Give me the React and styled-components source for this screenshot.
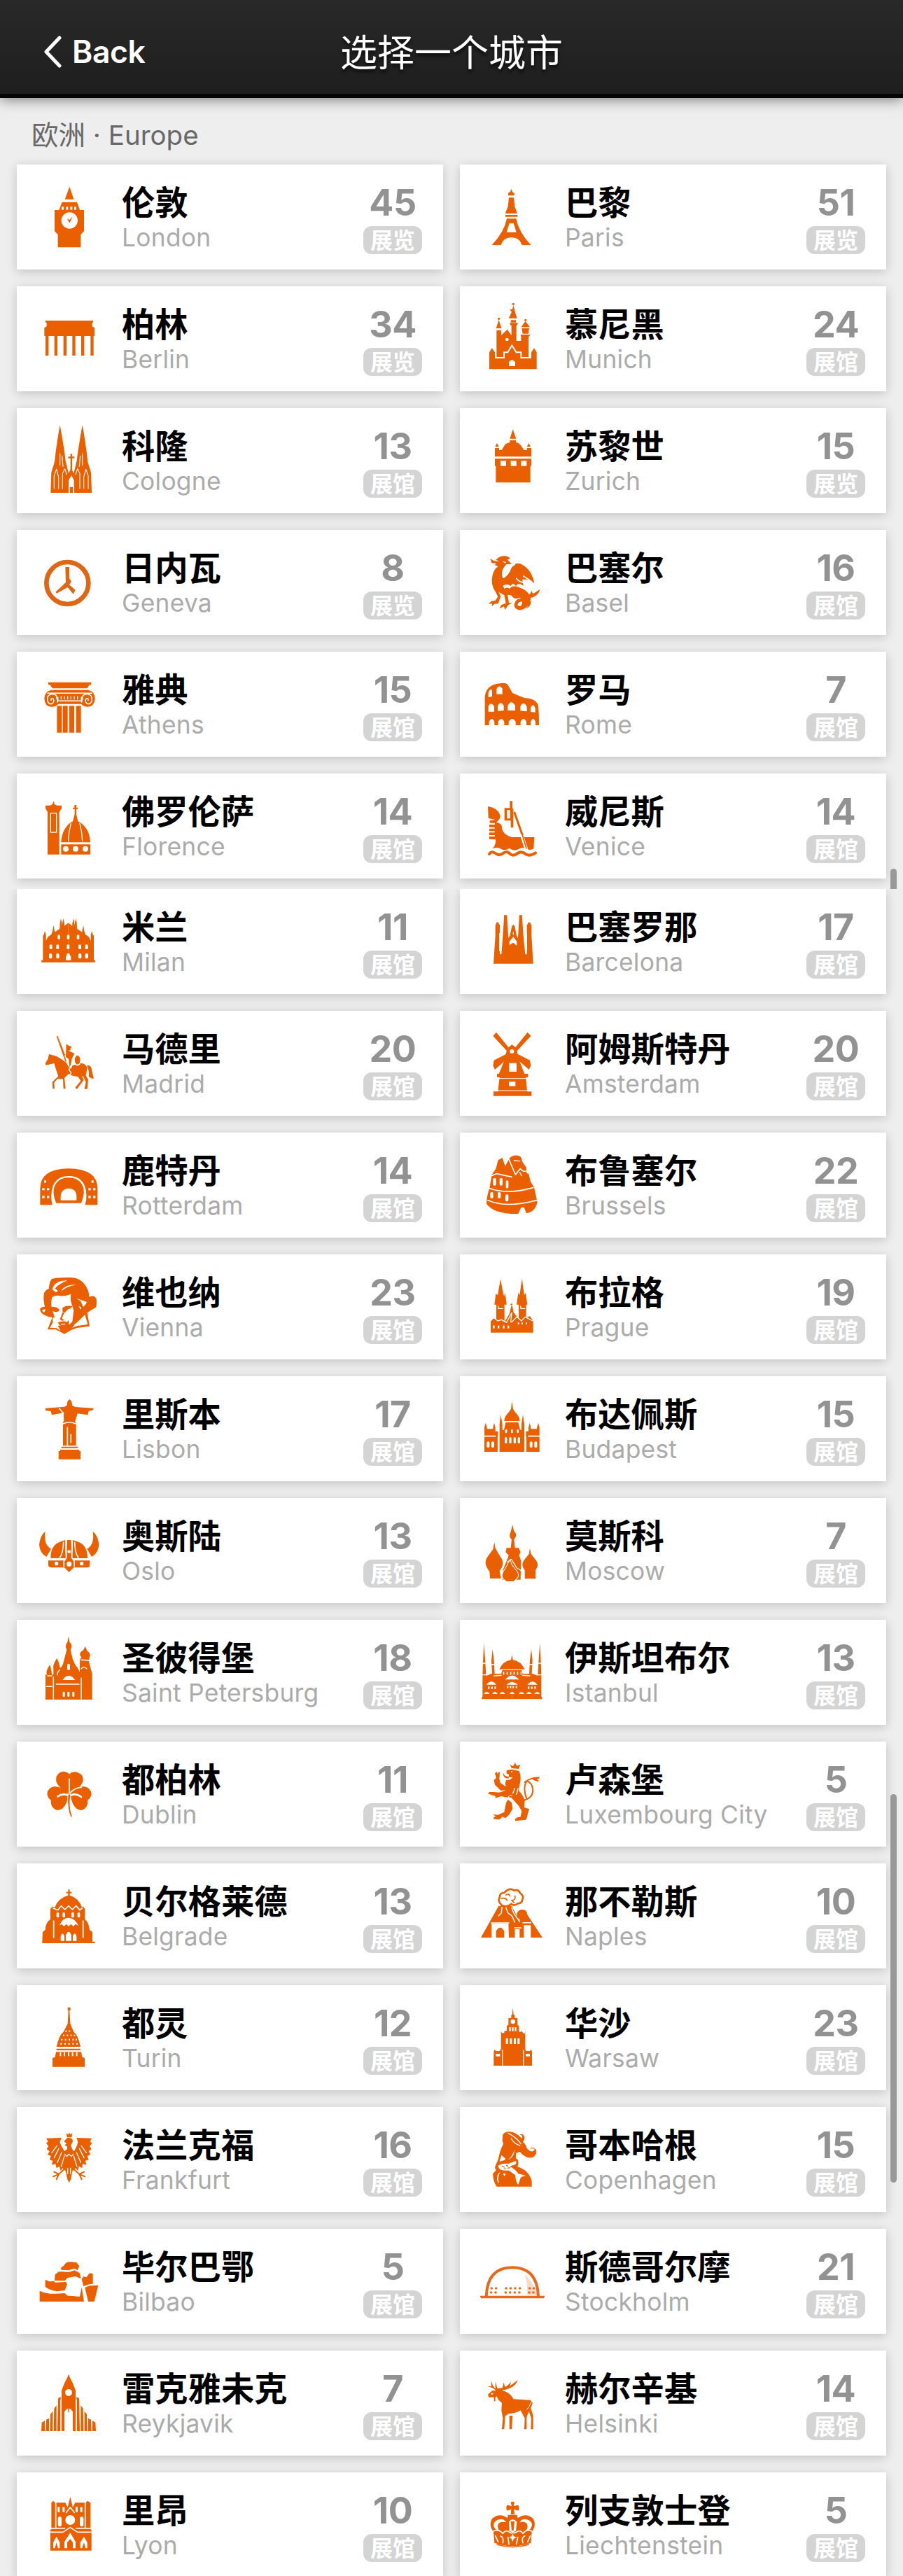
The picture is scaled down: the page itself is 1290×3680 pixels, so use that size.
import React from "react";
import styled, { createGlobalStyle } from "styled-components";

const GlobalStyle = createGlobalStyle`
  * { box-sizing: border-box; }
  body { margin: 0; background: #eee; }
`;

const latin = `Inter, "Noto Sans CJK SC", sans-serif`;
const han = `"Noto Sans CJK SC", Inter, sans-serif`;

const Page = styled.div`
  width: 1290px;
  height: 3680px;
  background: #eee;
  font-family: ${latin};
  overflow: hidden;
`;

const Pane = styled.section`
  position: relative;
  height: ${(p) => p.$height}px;
  background: #eee;
  overflow: hidden;
`;

const Header = styled.header`
  position: relative;
  display: grid;
  grid-template-columns: 1fr auto 1fr;
  align-items: center;
  height: 140px;
  padding: 9px 62px 0;
  border-bottom: 6px solid #080306;
  background: linear-gradient(#292929, #1e1e1e);
  box-shadow: 0 2px 18px rgba(0, 0, 0, 0.5);
  color: #fff;
`;

const Back = styled.button`
  display: flex;
  align-items: center;
  gap: 15px;
  padding: 5px 0 0;
  border: 0;
  background: none;
  color: inherit;
  font: 600 44.5px/50px ${latin};
  letter-spacing: -0.4px;
`;

const Title = styled.h1`
  margin: 0;
  font: 400 53px/64px ${han};
  text-shadow: 0 4px 5px rgba(0, 0, 0, 0.7);
`;

const SectionTitle = styled.h2`
  margin: 0;
  height: 95px;
  padding: 25px 45px 0;
  color: #686868;
  font: 400 38.5px/56px ${latin};
`;

const Grid = styled.div`
  display: grid;
  grid-template-columns: 1fr 1fr;
  gap: 24px;
  padding: 0 24px;
`;

const Card = styled.article`
  display: grid;
  grid-template-columns: 100px 1fr 84px;
  column-gap: 26px;
  height: 150px;
  padding: 0 30px 0 24px;
  background: #fff;
  box-shadow: 0 3px 14px rgba(0, 0, 0, 0.19);
`;

const Icon = styled.svg`
  width: 100px;
  height: 150px;
  fill: #ea6000;
`;

const Names = styled.div`
  padding-top: 22px;
  white-space: nowrap;
`;

const Name = styled.div`
  color: #000;
  font: 700 47.3px/60px ${han};
`;

const Latin = styled.div`
  margin-top: 1px;
  color: #ababab;
  font: 400 35.4px/44px ${latin};
  letter-spacing: 0.25px;
`;

const Tally = styled.div`
  display: flex;
  flex-direction: column;
  align-items: center;
  padding-top: 25px;
`;

const Count = styled.div`
  height: 63px;
  color: #929292;
  font: 700 52px/60px ${latin};
  letter-spacing: -0.5px;
`;

const Badge = styled.div`
  width: 84px;
  height: 40px;
  border-radius: 12px;
  background: #d4d4d4;
  color: #fff;
  font: 700 32px/37px ${han};
  text-align: center;
`;

const ScrollThumb = styled.div`
  position: absolute;
  right: 9px;
  top: ${(p) => p.$top}px;
  width: 9px;
  height: ${(p) => p.$length}px;
  border-radius: 5px;
  background: #999;
`;

const ORANGE = "#ea6000";

const Holes = ({ xs, y, w, h, r = 0 }) =>
  xs.map((x) => <rect key={x} x={x} y={y} width={w} height={h} rx={r} fill="#fff" />);

const Mirror = ({ cx, children }) => (
  <>
    {children}
    <g transform={`translate(${2 * cx} 0) scale(-1 1)`}>{children}</g>
  </>
);

const Lines = ({ d, w = 5, c = "#fff" }) => (
  <path d={d} fill="none" stroke={c} strokeWidth={w} strokeLinecap="round" strokeLinejoin="round" />
);

const icons = {
  London: (
    <>
      <path d="M154 95L172 149H134ZM122 161H186L198 195H216V286L202 300V355H104V300L90 286V195H109Z" />
      <Holes xs={[120, 139, 157, 174]} y={181} w={9} h={13} />
      <circle cx="154" cy="240" r="35" fill="#fff" />
      <path d="M143 231L153 238L167 223L154 251Z" />
    </>
  ),
  Paris: (
    <>
      <path d="M148 105L153 118L161 122V133H135V122L143 118ZM138 142H159L163 180L174 210H122L134 180ZM123 216H175V224H123ZM129 232H169Q180 290 232 345H194Q186 314 149 312Q112 314 104 345H65Q118 290 129 232Z" />
      <path d="M140 252H158L170 290H128Z" fill="#fff" />
    </>
  ),
  Berlin: (
    <>
      <path d="M51 147H255V155H251V172L261 178V213H46V178L56 172V155H51Z" />
      {[51, 89, 128, 166, 204, 244].map((x) => <rect key={x} x={x} y="210" width="13" height="87" />)}
    </>
  ),
  Munich: (
    <>
      <path d="M85 188H105V210L131 185L166 234H190V212L187 207H230L222 218V304H85ZM83 180L95 144L106 180ZM149 166H170V240H149ZM141 157H177L172 168H146ZM146 145H168V155H146ZM137 137L150 110L142 100L153 98L157 80L165 112L173 137ZM190 175L209 150L228 175ZM193 179H225L221 203H197Z" />
      <circle cx="95" cy="139" r="5" /><circle cx="157" cy="76" r="5" /><circle cx="209" cy="145" r="5" />
      <circle cx="130" cy="228" r="7" fill="#fff" />
      <path d="M54 355V283L65 265L78 283V309H120V286H135L151 259L168 286H187V309H234V283L246 265L257 283V355Z" stroke="#fff" strokeWidth="12" paintOrder="stroke" />
      <path d="M138 342V325Q151 307 165 325V342Z" fill="#fff" />
    </>
  ),
  Cologne: (
    <>
      <Mirror cx={161}>
        <path d="M73 363L76 275L90 230L95 186L106 112L113 73L120 112L132 186L137 225L150 280L162 255V363Z" />
        <Lines d="M88 345V290L98 262L107 295V345M113 245V195M126 250L122 205M124 345V280L134 260L142 285" w={3.5} />
      </Mirror>
      <path d="M158 196H165V208H175V215H165V265H158V215H148V208H158Z" />
      <path d="M150 363V310L162 288L173 310V363Z" fill="#fff" />
      <path d="M155 338H168V363H155Z" />
    </>
  ),
  Zurich: (
    <>
      <path d="M155 91L169 131H142ZM78 208V171H96V180H107L122 155Q130 149 142 147V138H168V147Q180 148 188 158L203 180H215V171H234V208ZM87 150L95 166H79ZM223 150L231 166H215ZM78 217H234V248H230V319H82V248H78Z" />
      <Holes xs={[102, 146, 190]} y={226} w={24} h={22} />
    </>
  ),
  Geneva: (
    <>
      <circle cx="145" cy="228" r="90" fill="none" stroke="#df6614" strokeWidth="20" />
      <path d="M136 159H153V207L162 222L153 235L179 258L170 275L146 246L99 272L94 266L138 225Z" fill="#df6614" />
    </>
  ),
  Basel: (
    <>
      <path d="M58 122Q75 137 98 134L82 129Q96 111 120 112Q140 114 143 124L131 127L150 146L128 147Q108 165 108 190Q109 212 118 206Q140 190 148 165Q155 152 163 152L167 144L185 144Q235 165 247 229Q225 208 195 213L200 240Q180 222 168 241Q155 222 146 240Q130 228 112 239L119 253Q128 243 140 252Q155 236 178 245Q220 256 232 290Q228 335 185 344Q160 340 161 320Q165 298 185 294Q203 298 200 308Q178 305 175 322Q188 335 195 314Q196 298 184 290Q160 302 148 280L132 278L138 313L152 314L135 322L121 343L117 328L98 337L105 322L125 314L118 280L94 266L103 285L92 316L76 317L65 328L66 316L51 317L62 306L80 303L91 286L80 264Q62 240 66 205Q70 170 92 157L76 150L86 145L64 141ZM272 254Q262 288 225 292L218 283L230 272L235 261L241 274ZM227 300L233 309Q230 330 212 337Q226 320 227 300Z" />
      <path d="M110 134L126 138L122 143Z" fill="#fff" />
      <Lines d="M170 208Q180 222 197 225M200 198Q218 208 238 224" w={5} />
    </>
  ),
  Athens: (
    <>
      <path d="M63 131H247V142H240L229 157H81L70 142H63ZM76 164H234Q263 170 263 202Q260 236 233 236Q214 236 204 224H106Q96 236 76 236Q48 236 46 202Q47 170 76 164Z" />
      <Lines d="M60 178H249M104 195V211H205V195M103 216L97 187Q76 174 62 190Q54 208 66 222Q84 228 87 210Q84 196 75 202V208M206 216L212 187Q233 174 247 190Q255 208 243 222Q225 228 222 210Q225 196 234 202V208" w={4.5} />
      <Lines d="M118 192V203M132 192V203M146 192V203M160 192V203M174 192V203M188 192V203" w={4} />
      {[100, 125, 153, 182].map((x) => <rect key={x} x={x} y="232" width="21" height="115" />)}
    </>
  ),
  Rome: (
    <>
      <path d="M35 315V195Q38 140 105 135Q130 130 138 150L153 177Q185 190 204 198Q250 200 262 225Q267 245 267 315Z" />
      <g fill="#fff">
        <path d="M50 196V176Q56 155 66 165V192ZM85 182V160Q96 138 110 158V182ZM50 257V235Q60 210 75 235V257ZM90 254V232Q103 207 116 232V252ZM133 252V232Q148 202 165 232V252ZM187 253V234Q201 208 215 236V256ZM231 258V240Q242 217 251 242V260Z" />
        <path d="M53 316V300Q65 276 76 300V316ZM92 316V300Q105 276 118 300V316ZM137 316V300Q152 276 167 300V316ZM188 316V300Q201 276 213 300V316ZM231 316V300Q242 276 252 300V316Z" />
      </g>
    </>
  ),
  Florence: (
    <>
      <path d="M85 118L90 132L101 137H120V150L110 165V347H60V165L51 150V137H70L81 132Z" />
      <rect x="73" y="170" width="25" height="82" fill="none" stroke="#fff" strokeWidth="4" />
      <path d="M175 135H183V146H190V152H183V175L190 205Q240 230 243 295H118Q122 230 168 205L176 175V152H168V146H175ZM118 304H243V347H118Z" />
      <Lines d="M160 214Q150 250 149 290M198 214Q208 250 209 290" w={4} />
      {[138, 180, 222].map((x) => <circle key={x} cx={x} cy="323" r="12" fill="#fff" />)}
    </>
  ),
  Venice: (
    <>
      <path d="M48 141Q90 146 101 180Q102 192 92 202L84 210Q110 212 108 235Q112 262 150 273H247L244 322Q228 331 214 323Q195 314 178 325Q160 335 140 320Q118 335 100 321Q88 315 68 322Q86 300 80 282H54V270H78V264H54V253H77V247H54V236H77V230H54V219H78V212H56V202L80 198L50 192Z" />
      <path fillRule="evenodd" d="M142 118H153V150H157V232H146V202H119V148H142ZM130 157V193H143V157Z" />
      <Lines d="M162 168L198 270" w={9} c={ORANGE} />
      <Lines d="M194 268L214 328" w={14} />
      <Lines d="M195 262L213 320" w={5} c={ORANGE} />
      <Lines d="M54 345Q64 330 80 342Q98 356 116 340Q130 330 145 346Q160 356 178 340Q196 332 210 346Q230 356 252 340" w={12} c={ORANGE} />
    </>
  ),
  Milan: (
    <>
      <Mirror cx={149}>
        <path d="M34 313V306H40V200L44 196L48 180L53 196V222L62 205L76 195L81 180L85 155L90 180V185L112 170L113 145L117 127L121 145V158L127 125L132 148V158L149 145V313Z" />
      </Mirror>
      <Holes xs={[68, 97, 142, 192, 221]} y={238} w={12} h={20} r={5} />
      <Holes xs={[66, 97, 142, 192, 221]} y={276} w={13} h={22} r={5} />
      <Holes xs={[103, 143, 185]} y={196} w={11} h={20} r={5} />
      <path d="M138 313V290Q149 268 160 290V313Z" fill="#fff" />
      <path d="M34 305H264V314H34Z" />
    </>
  ),
  Barcelona: (
    <>
      <path d="M72 320L80 200V155L84 148V143H94V148L99 155V280H106L112 200L117 125V112H130V125L136 210L142 200L151 160L157 152L163 160L171 200L177 210L182 125V112H195V125L200 200L208 280H215V155L220 148V143H230V148L235 155V200L242 320Z" />
      <path d="M140 240V225L157 205L172 225V243L157 230Z" fill="#fff" />
      <Lines d="M98 265V190M214 265V190M157 195V185" w={4} />
      <path d="M136 262L145 246L150 255L157 240L163 255L168 246L178 262" />
    </>
  ),
  Madrid: (
    <>
      <path d="M102 102L135 190L130 194ZM140 142L148 148L165 155L158 160V168L150 172L175 182L164 206Q160 235 154 240L150 206L138 198ZM66 186Q84 190 98 195Q120 206 140 222L152 243L160 247L167 234Q185 230 195 226Q222 220 230 246L224 278L234 295L230 335H218L224 305L212 280Q195 280 207 278L215 296L186 335L178 330L202 300L190 282Q165 280 150 270L132 288L137 334H128L126 292H102L88 308L90 334H82L80 305L98 288L106 280Q92 240 88 225L53 233L50 226L62 205Z" />
      <path d="M228 235Q248 230 250 258L258 290Q242 292 236 280Q240 258 228 235Z" />
      <ellipse cx="188" cy="211" rx="14" ry="22" stroke="#fff" strokeWidth="5" />
      <Lines d="M101 110L138 216" w={5} c={ORANGE} />
      <Lines d="M163 240L151 252L161 266L154 276" w={4} />
    </>
  ),
  Rotterdam: (
    <>
      <path d="M28 310V240Q28 156 150 154Q274 156 274 240V310H221Q233 268 219 228Q200 185 150 186Q102 186 83 228Q70 268 80 310Z" />
      <path d="M97 302Q75 250 96 218Q115 193 150 193Q190 193 207 222Q225 250 204 302Z" />
      <path d="M116 290V270Q120 240 150 239Q182 240 184 270V290Z" fill="#fff" />
      <Holes xs={[37, 57, 235, 255]} y={238} w={10} h={9} />
      <Holes xs={[37, 57, 235, 255]} y={271} w={10} h={10} />
      <Holes xs={[45, 248]} y={205} w={9} h={10} />
    </>
  ),
  Vienna: (
    <>
      <path d="M78 105Q95 98 165 99Q200 102 220 130Q238 155 238 182Q262 172 269 192Q272 215 266 228Q250 236 230 250L240 308L186 315L160 325L132 341L95 322L60 322L80 270Q60 268 42 258Q25 245 28 232Q40 222 48 225Q40 190 45 165Q52 152 65 148Q68 115 78 105Z" />
      <g fill="#fff">
        <path d="M80 183Q98 172 112 178Q135 180 160 170Q156 195 164 215L172 240L166 288L148 306L128 302L104 306L116 328L98 316L70 314L92 275L84 250L78 230Q72 202 80 183Z" />
        <path d="M80 150Q88 112 145 112Q106 128 92 146L104 156Q96 166 90 158ZM118 158Q130 130 184 130Q140 138 118 158Z" />
        <path d="M184 188L228 204Q222 220 212 224L202 200ZM192 222L204 226V238ZM220 258L232 300L188 306L166 314L176 300Q202 278 220 258Z" />
        <path d="M36 240Q46 232 52 238L44 250Z" />
      </g>
      <path d="M76 226Q98 222 112 238L104 245Q92 250 78 240ZM124 228Q142 218 166 222L160 232Q150 230 142 240L134 250L124 246ZM132 250Q124 264 122 276L134 282L122 284L112 278Q120 262 124 248ZM104 292Q128 282 142 290L150 282L152 306L140 318L118 320L112 312L130 310L110 302Z" />
      <Lines d="M118 299H134" w={4} />
      <path d="M82 272L98 268Q92 290 82 304Z" fill="#fff" />
    </>
  ),
  Amsterdam: (
    <>
      <path d="M151 145L170 160L181 210L205 270H220V285H211L216 346H235V365H72V346H91L98 285H87V270H95L120 210L130 162Z" />
      <Mirror cx={151}>
        <path d="M70 108L84 92L151 175L143 187ZM74 212L141 178L151 188L78 252L70 235Z" />
      </Mirror>
      <Holes xs={[139]} y={224} w={32} h={37} />
      <Holes xs={[138]} y={304} w={28} h={19} />
      <circle cx="151" cy="174" r="9" fill="#fff" />
      <Lines d="M95 290H211M74 342H233" w={3} />
    </>
  ),
  Brussels: (
    <>
      <path d="M140 110Q165 88 190 105L196 125L213 150V172L223 178L231 210L246 235L260 298Q250 342 212 345L203 320L190 322L178 348Q75 350 42 305Q42 275 55 238L65 180L82 155L92 118L110 108L122 145Z" />
      <Lines d="M137 112L166 180L186 155L200 166L210 165M62 185L85 176L150 190M52 238Q130 268 242 236M48 290Q130 325 258 290" w={5} />
      <Holes xs={[70, 98]} y={195} w={13} h={32} r={6} />
      <Holes xs={[125]} y={205} w={11} h={34} r={6} />
      <Holes xs={[58, 90]} y={255} w={13} h={27} r={6} />
      <Holes xs={[123]} y={265} w={13} h={30} r={6} />
      <Lines d="M160 120L185 122M185 170L192 185" w={4} />
    </>
  ),
  Prague: (
    <>
      <path d="M102 106L114 170L118 180L122 165L128 215H119V290L128 275L140 255L148 222L153 222L158 248L167 260L180 275V215H171L178 165L184 175L194 104L204 175L210 165L217 215H212V270L228 265L242 285V335H60V285L72 273L84 280V215H76L82 168L90 175Z" />
      <Lines d="M92 222V232H112M188 222V232H206M62 283L72 270L90 285L106 280L128 292L150 250L146 290M150 290L172 268L192 285L208 268L240 285" w={4} />
      <Holes xs={[70, 90, 112, 132]} y={305} w={7} h={12} />
      <Holes xs={[176, 192, 210]} y={292} w={6} h={8} />
      <circle cx="149" cy="215" r="4" />
    </>
  ),
  Lisbon: (
    <>
      <path d="M154 99Q166 108 165 125L178 132L256 137V145L236 150L232 166L188 160L178 195L182 200V298H126V200L130 190L128 152L120 158L78 166L74 150L51 147V137L132 131L143 125Q142 106 154 99ZM119 302H190V308H119ZM114 315H196V321H201V356H107V321H114Z" />
      <Lines d="M110 138L128 160M126 204Q152 192 182 204M145 300V220M160 285V250" w={5} />
    </>
  ),
  Budapest: (
    <>
      <path d="M151 107L156 140L165 155Q184 170 184 192H118Q119 170 137 155L147 140ZM124 197H178L186 230H192V205L198 165L204 205V324H98V205L103 165L110 205V230H117Z" />
      <Mirror cx={151}>
        <path d="M33 324V220L38 200L44 220V226H70V220L75 200L80 220V236H91V324Z" />
        <Lines d="M34 257H80M92 260V322" w={5} />
        <Holes xs={[43, 63]} y={280} w={12} h={26} r={5} />
      </Mirror>
      <Holes xs={[122, 147, 172]} y={228} w={8} h={16} r={4} />
      <Holes xs={[120, 139, 158, 176]} y={262} w={10} h={26} r={4} />
    </>
  ),
  Oslo: (
    <>
      <Mirror cx={152}>
        <path d="M50 143Q28 160 24 200Q26 235 55 252L75 218Q42 200 50 143Z" />
        <path d="M73 258Q73 202 112 188L136 180V258ZM63 268H152V318L132 298H75Q65 298 63 288Z" />
        <Lines d="M65 263H140M112 256Q126 240 128 190" w={5} />
        <circle cx="98" cy="281" r="8" fill="#fff" />
      </Mirror>
      <path d="M144 180H160L170 262L152 317L134 262Z" />
      <Lines d="M140 184V256L130 270V294M164 184V256L174 270V294" w={5} />
      <circle cx="152" cy="230" r="7" fill="#fff" /><circle cx="152" cy="283" r="11" fill="#fff" />
    </>
  ),
  Moscow: (
    <>
      <path d="M154 115L159 140Q172 154 168 165L160 178L164 214L180 214L188 232L182 245L190 270L188 350H110L112 310L132 260L137 245L124 232L128 214L146 214L150 178Q136 165 144 150Z" />
      <g stroke="#fff" strokeWidth="6" paintOrder="stroke">
        <path d="M76 190L80 215L100 250Q125 280 98 312L104 345H57L55 315Q25 280 48 250L70 220Z" />
        <path d="M228 215L233 240L250 262Q272 285 252 310V346H206V310Q185 285 208 260L224 240Z" />
        <path d="M143 268L150 288L168 310Q188 335 165 350L158 357H128L120 350Q100 335 122 305Z" />
      </g>
      <Lines d="M130 275L148 262L172 300L192 312V350" w={4} />
    </>
  ),
  "Saint Petersburg": (
    <>
      <path d="M150 70L154 95Q170 108 158 128L168 170L180 196L188 205L198 225V195V170L205 160Q188 145 214 128L221 114L229 132Q248 146 240 160L236 175L245 210L251 230V342H51V235H58Q48 225 70 192Q78 220 78 235H85V210Q80 195 100 164Q112 190 112 205L118 205L126 190L142 128Q132 110 145 95Z" />
      <Holes xs={[144]} y={188} w={12} h={28} r={6} />
      <Lines d="M101 236Q104 220 112 215M85 245V340M204 250V340M97 276H195M56 286H78M204 210Q215 196 228 210M202 172L238 174M60 240H78" w={4.5} />
      <Holes xs={[125, 145, 166]} y={308} w={9} h={22} r={4} />
      <path d="M124 258Q150 220 178 258Z" fill="#fff" />
    </>
  ),
  Istanbul: (
    <>
      <Mirror cx={151}>
        <path d="M25 330V240L27 180L31 100L37 180L40 240L66 230L63 175L68 125L74 175L77 232H105L110 216H151V340H22V330Z" />
        <Lines d="M27 186H38M24 236H42M63 192H74M74 240L106 238" w={4} />
        <Holes xs={[48, 62, 76]} y={286} w={7} h={10} />
        <path d="M42 278Q62 252 84 278ZM30 318Q42 300 56 318ZM66 318Q78 300 90 318ZM98 318Q110 300 122 318Z" fill="#fff" />
      </Mirror>
      <path d="M151 150L155 172Q190 178 206 212H97Q112 178 147 172Z" />
      <Holes xs={[113, 128, 143, 158, 173, 188]} y={222} w={5} h={14} r={2} />
      <path d="M122 256Q151 222 182 256ZM128 278Q151 256 176 278Z" fill="#fff" />
      <Holes xs={[130, 142, 154, 167]} y={284} w={6} h={9} />
      <path d="M140 318Q151 300 163 318Z" fill="#fff" />
    </>
  ),
  Dublin: (
    <>
      <path d="M153 226Q114 205 98 175Q90 135 125 128Q145 128 153 140Q162 128 182 130Q220 140 210 175Q192 210 153 226Z" />
      <path d="M148 227Q130 195 90 192Q60 196 58 225Q62 245 74 250Q72 285 100 294Q142 292 148 227Z" />
      <path d="M158 227Q175 195 215 192Q245 196 248 225Q244 245 232 250Q234 285 207 294Q166 292 158 227Z" />
      <Lines d="M153 220V160M158 218Q180 196 205 196" w={5} />
      <Lines d="M103 235Q125 220 145 230M162 230Q180 220 204 237" w={8} />
      <path d="M147 225Q142 285 159 325L166 320Q150 280 159 225Z" stroke="#fff" strokeWidth="3" />
    </>
  ),
  "Luxembourg City": (
    <>
      <path d="M142 98L155 106L165 91L172 104L187 98L180 117L150 114Z" />
      <path d="M128 123L150 119L182 126Q192 150 186 175L180 210Q198 228 206 252L203 276Q190 277 172 266L148 240L118 238V215L128 200L122 180L126 165L140 164L155 154L138 152V140L128 138Z" />
      <path d="M130 208L104 210L78 185L74 165L84 155L78 136L86 130L91 142V131H99L97 160L102 178L130 196ZM124 238L105 234L80 242V234L48 223L55 216H74L96 218L130 208Z" />
      <path d="M134 248L150 262L154 288L140 312L124 328L110 322L98 334L72 332L74 323L82 321L70 312L92 314L118 302L126 262ZM165 255L205 268L204 282L225 289L212 335L165 340L164 332L174 325L187 323L193 298L180 275Z" />
      <path d="M114 134Q118 150 138 150V157Q116 160 113 140Z" />
      <Lines d="M202 252Q246 240 240 200Q236 176 214 168Q196 200 214 244M206 174Q230 154 266 156M244 162L262 168" w={6} c={ORANGE} />
      <path d="M240 154L270 151L258 161L264 170L242 163Z" />
      <Lines d="M136 236Q155 265 178 276M155 222L163 200M171 226L177 200M142 230H150" w={4} />
      <circle cx="150" cy="129" r="3" fill="#fff" />
    </>
  ),
  Belgrade: (
    <>
      <path d="M148 112H155V122H163V128H155V137Q194 148 208 190L212 184L220 195V240Q236 250 240 285L252 294V335H263V342H37V335L39 294L50 285Q52 250 72 240V195L82 184L90 190Q105 148 148 137V128H140V122H148Z" />
      <Lines d="M84 192L104 200L118 182L134 198L150 182L166 198L182 182L198 200L208 192M86 246V318M212 246V318" w={5} />
      <Holes xs={[98, 124, 162, 188]} y={210} w={11} h={22} r={5} />
      <path d="M110 268Q122 234 150 233Q180 236 192 268L180 260L170 270L160 260L150 270L140 260L130 270L120 260Z" fill="#fff" />
      <path d="M116 332V312Q124 290 132 312V332ZM138 332V308Q150 278 162 308V332ZM168 332V312Q177 290 184 312V332Z" fill="#fff" />
    </>
  ),
  Naples: (
    <>
      <path d="M94 182H150L184 250V318H163V300H138V258H64V318H18ZM172 230V215Q178 198 194 198Q215 196 217 220L282 318H232V265H202V318H184V240Z" />
      <path d="M83 318V290Q100 260 118 290V318Z" />
      <path d="M163 282H184V320H163Z" fill="#fff" />
      <path d="M136 256H163V318H138Z" />
      <Lines d="M62 255H138M162 276H190M198 254H232M108 188L106 212L94 224M124 186L134 212L152 226L163 252M150 190L158 212L184 250" w={4.5} />
      <g stroke={ORANGE} strokeWidth="8" fill="#fff">
        <path d="M108 180Q88 160 98 146Q98 126 118 126Q140 102 160 116Q180 110 185 126Q204 140 196 155Q194 172 176 172Q160 185 148 174Q130 190 108 180Z" />
      </g>
      <Lines d="M105 150Q125 145 130 158M125 136Q138 125 142 140M150 158Q168 158 164 140M150 158L160 168" w={5} c={ORANGE} />
    </>
  ),
  Turin: (
    <>
      <path d="M146 95H158V106L154 110L157 165L172 200Q190 212 201 264H98Q110 212 128 200L146 165L149 110L146 106ZM98 272H200V279H98ZM96 286H204L208 308L219 312V350H81V312L92 308Z" />
      <Holes xs={[136, 151]} y={194} w={6} h={6} />
      <Holes xs={[126, 142, 158, 172]} y={212} w={6} h={6} />
      <Holes xs={[118, 134, 150, 166, 180]} y={230} w={6} h={7} />
      <Holes xs={[115, 132, 149, 166, 183]} y={248} w={6} h={7} />
      <Holes xs={[112, 129, 147, 164, 182]} y={287} w={6} h={17} />
    </>
  ),
  Warsaw: (
    <>
      <path d="M155 97L158 125L163 130V140L175 142V170L181 174V200H190V195L205 210L208 196V276L202 282V345H110V282L104 276V196L108 205L118 205V198L129 194V174L136 170V142L148 140V130L152 125Z" />
      <circle cx="155" cy="156" r="10" fill="#fff" />
      <Holes xs={[139, 151, 163]} y={180} w={7} h={17} />
      <Holes xs={[125, 142, 159, 175]} y={228} w={9} h={24} />
      <Mirror cx={155}>
        <path d="M73 345V285L77 275L82 282H98L104 272L108 282V345Z" />
        <Holes xs={[82]} y={294} w={18} h={11} />
        <Lines d="M110 278V345" w={4} />
      </Mirror>
    </>
  ),
  Frankfurt: (
    <>
      <path d="M140 112L148 118L153 110L158 118L166 112L163 130H143ZM144 132Q168 130 168 148L160 165L166 182L174 190L186 165L190 150L184 132L250 134L242 148L250 155L240 168L248 180L236 190L244 204L230 210L236 226L222 230L226 248L210 244L208 262L194 254L190 274L180 262L166 275L160 308L152 325L144 308L138 275L124 262L116 274L110 254L98 262L94 244L78 248L82 230L68 226L74 210L60 204L68 190L56 180L64 168L54 155L62 148L54 134L120 132L112 150L118 165L132 190L144 180L143 168L132 164L142 156L130 148Z" />
      <Lines d="M130 268L108 288L88 278M108 288L84 298M108 288L98 310M174 268L196 288L216 278M196 288L220 298M196 288L206 310" w={6} c={ORANGE} />
      <Lines d="M88 218L108 178M102 238L120 195M216 218L196 178M202 238L184 195M78 196L100 166M226 196L204 166M118 256L132 210M186 256L172 210M134 202L142 212L152 202L162 212L170 202M146 262V285M158 262V285" w={4} />
    </>
  ),
  Copenhagen: (
    <>
      <path d="M112 118Q125 100 155 108Q180 118 192 134Q198 130 194 122L184 118Q200 112 205 130Q205 142 198 150Q210 158 214 175Q225 192 240 190Q252 185 246 178L228 178Q240 168 254 182Q260 200 245 212Q232 222 212 214Q195 206 185 192L168 198V220L176 226Q182 240 175 256Q225 272 236 318V341H86Q68 315 70 285L84 270Q76 268 80 252L92 225Q100 185 114 158L110 145Z" />
      <g fill="#fff">
        <path d="M106 206L124 222L118 228L98 234ZM163 182Q160 216 134 227Q152 212 163 182Z" />
        <path d="M92 252Q110 240 136 243L168 231Q172 240 166 246L142 254Q168 268 178 286L211 294Q195 296 188 304L178 334Q168 325 165 292L138 272Q92 276 92 252Z" />
        <path d="M102 278Q80 290 90 322L96 326Q86 302 102 278ZM112 286L124 284L120 298Z" />
      </g>
      <Lines d="M134 112Q168 128 190 158M148 135Q160 158 185 165M176 200V216" w={4} />
      <Lines d="M110 254L118 258M128 250L134 254M118 265H124M134 262L142 260" w={4} c={ORANGE} />
    </>
  ),
  Bilbao: (
    <>
      <path d="M116 170Q122 160 130 158Q138 140 160 142L184 144L196 160L188 178L176 170L150 178L120 176ZM92 196L108 184H130L150 186L176 178L198 190L202 214L180 204L146 210L134 222H90Z" />
      <path d="M50 218L68 226L88 224L92 230L138 228L144 236L134 264L100 268Q66 262 50 248ZM206 216L214 204L226 208L240 190L254 192V236Q236 236 214 246Z" />
      <path d="M26 266Q60 284 132 276L146 286L198 290L206 250L216 312H26ZM220 252L240 244L277 242L260 312H234Z" />
      <path d="M152 222Q176 208 196 216L198 290L142 286Z" fill="#fff" />
    </>
  ),
  Stockholm: (
    <>
      <path d="M205 195Q240 225 262 284H215Q220 235 205 195Z" fill="#f9d9c8" />
      <path d="M41 290Q45 166 152 166Q260 166 264 290" fill="none" stroke="#e46a20" strokeWidth="12" />
      <path d="M14 287H292L288 298H18Z" fill="#e46a20" />
      {[64, 83, 126, 145, 165, 185, 227, 245].map((x) => (
        <g key={x} fill="#e46a20"><circle cx={x} cy="255" r="5.5" /><circle cx={x - 2} cy="273" r="5.5" /></g>
      ))}
    </>
  ),
  Reykjavik: (
    <>
      <Mirror cx={150}>
        <path d="M150 104L132 140L120 170V345H132V262L142 250Q150 244 150 260Z" />
        <path d="M105 205L116 198V345H102ZM88 248L98 235V345H86ZM72 272L82 260V345H70ZM54 296L66 290V345H52ZM35 308L48 300V345H33Z" />
      </Mirror>
      <path d="M148 104H152V265H148Z" />
      <circle cx="150" cy="180" r="15" fill="#fff" />
      <path d="M138 346V290Q150 252 163 290V346Z" fill="#fff" />
      <Lines d="M117 345V212M183 345V212" w={4} />
    </>
  ),
  Helsinki: (
    <>
      <path d="M62 128L68 148L80 164L80 132L88 162L110 160L116 136L121 156Q135 150 148 133L142 152L176 126Q168 148 152 156L130 166L108 170Q145 180 158 208L230 212L240 224L232 246L242 280V337H232L234 290L224 260L214 285V337H204L206 290L188 256Q165 270 138 270L122 280L118 337H108L112 290L106 256L108 224L94 212L86 196L80 200V216L74 218V200L52 200L48 188L66 172L82 172L72 162L45 152L62 154ZM140 280L154 278L150 337H140Z" />
      <Lines d="M234 220Q226 240 216 252M218 280L216 300" w={3} />
      <path d="M60 184L72 182L66 190Z" fill="#fff" />
    </>
  ),
  Lyon: (
    <>
      <path d="M157 105L168 150L178 130H224L230 122L244 130V245H248V335H72V245H76V130L84 122L92 130H136L146 150Z" />
      <Holes xs={[103, 124, 180, 200]} y={148} w={9} h={22} />
      <Holes xs={[104, 198]} y={190} w={16} h={42} r={7} />
      <Lines d="M76 240H134M182 240H244M95 128V240M221 128V240M140 172L157 150L175 172M74 256H126L157 236L188 256H246" w={5} />
      <circle cx="157" cy="204" r="21" fill="#fff" />
      <path d="M84 325V300L98 275L112 300V325ZM132 325V298L157 258L180 298V325ZM200 325V300L216 275L230 300V325Z" fill="#fff" />
      <path d="M90 330L98 300L106 330ZM144 330V300L157 285L168 300V330ZM206 330L216 300L224 330Z" />
    </>
  ),
  Liechtenstein: (
    <>
      <path d="M146 128Q154 122 162 128L158 144L178 140Q184 152 178 164L160 158L162 180H146L148 158L130 164Q124 152 130 140L150 144ZM134 182H172L176 196Q212 170 242 198Q258 225 236 256L232 302Q154 330 76 302L72 256Q50 225 66 198Q98 170 132 196Z" />
      <g fill="#fff">
        <path d="M82 246Q62 222 84 206Q112 192 126 214Q100 208 92 222Q86 238 100 254ZM138 212Q154 192 172 212L168 252L154 256L140 252ZM226 246Q248 222 226 206Q198 192 184 214Q208 208 216 222Q222 238 208 254Z" />
      </g>
      <path d="M146 210H162L158 250H150Z" />
      <Lines d="M72 252Q92 240 112 262Q124 245 138 255Q150 264 154 256Q160 264 172 255Q188 245 198 262Q216 240 236 252M92 298L80 272M112 302Q118 280 102 272M138 308L134 278M170 308L176 278M198 302Q190 280 206 272M218 298L230 272" w={5} />
      <path d="M154 262L159 274L170 278L159 284L154 298L149 284L138 278L149 274Z" fill="#fff" />
      <path d="M84 306Q154 328 226 306L222 312Q154 332 88 312Z" />
    </>
  ),
};

const upper = [
  ["伦敦", "London", 45, "展览"],
  ["巴黎", "Paris", 51, "展览"],
  ["柏林", "Berlin", 34, "展览"],
  ["慕尼黑", "Munich", 24],
  ["科隆", "Cologne", 13],
  ["苏黎世", "Zurich", 15, "展览"],
  ["日内瓦", "Geneva", 8, "展览"],
  ["巴塞尔", "Basel", 16],
  ["雅典", "Athens", 15],
  ["罗马", "Rome", 7],
  ["佛罗伦萨", "Florence", 14],
  ["威尼斯", "Venice", 14],
];

const lower = [
  ["米兰", "Milan", 11],
  ["巴塞罗那", "Barcelona", 17],
  ["马德里", "Madrid", 20],
  ["阿姆斯特丹", "Amsterdam", 20],
  ["鹿特丹", "Rotterdam", 14],
  ["布鲁塞尔", "Brussels", 22],
  ["维也纳", "Vienna", 23],
  ["布拉格", "Prague", 19],
  ["里斯本", "Lisbon", 17],
  ["布达佩斯", "Budapest", 15],
  ["奥斯陆", "Oslo", 13],
  ["莫斯科", "Moscow", 7],
  ["圣彼得堡", "Saint Petersburg", 18],
  ["伊斯坦布尔", "Istanbul", 13],
  ["都柏林", "Dublin", 11],
  ["卢森堡", "Luxembourg City", 5],
  ["贝尔格莱德", "Belgrade", 13],
  ["那不勒斯", "Naples", 10],
  ["都灵", "Turin", 12],
  ["华沙", "Warsaw", 23],
  ["法兰克福", "Frankfurt", 16],
  ["哥本哈根", "Copenhagen", 15],
  ["毕尔巴鄂", "Bilbao", 5],
  ["斯德哥尔摩", "Stockholm", 21],
  ["雷克雅未克", "Reykjavik", 7],
  ["赫尔辛基", "Helsinki", 14],
  ["里昂", "Lyon", 10],
  ["列支敦士登", "Liechtenstein", 5],
];

const CityGrid = ({ cities }) => (
  <Grid>
    {cities.map(([name, latinName, count, kind = "展馆"]) => (
      <Card key={latinName}>
        <Icon viewBox="0 0 300 450" aria-hidden="true">{icons[latinName]}</Icon>
        <Names>
          <Name>{name}</Name>
          <Latin>{latinName}</Latin>
        </Names>
        <Tally>
          <Count>{count}</Count>
          <Badge>{kind}</Badge>
        </Tally>
      </Card>
    ))}
  </Grid>
);

export default function App() {
  return (
    <Page>
      <GlobalStyle />
      <Pane $height={1270}>
        <Header>
          <Back>
            <svg width="26" height="46" viewBox="0 0 26 46" fill="none" stroke="#fff" strokeWidth="5" strokeLinecap="round" strokeLinejoin="round">
              <path d="M23 3L4 23L23 43" />
            </svg>
            Back
          </Back>
          <Title>选择一个城市</Title>
        </Header>
        <SectionTitle>欧洲 · Europe</SectionTitle>
        <CityGrid cities={upper} />
        <ScrollThumb $top={1241} $length={40} />
      </Pane>
      <Pane $height={2410}>
        <CityGrid cities={lower} />
        <ScrollThumb $top={1293} $length={555} />
      </Pane>
    </Page>
  );
}
